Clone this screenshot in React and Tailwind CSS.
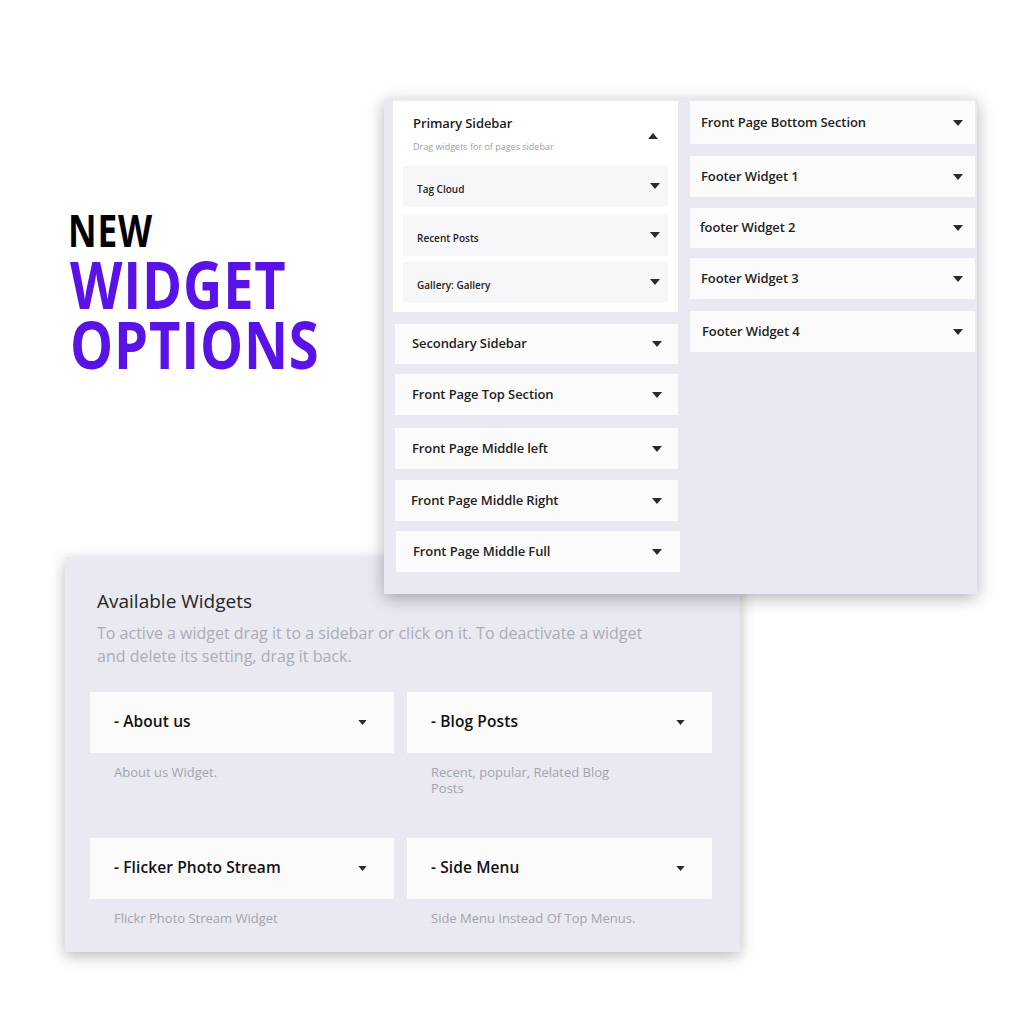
import React from "react";

const Caret = ({ up = false, className = "", w = 10, h = 6 }) => (
  <svg width={w} height={h} viewBox="0 0 10 6" className={className}>
    {up ? <path d="M0 6 L5 0 L10 6 Z" fill="#2b2b2b" /> : <path d="M0 0 L10 0 L5 6 Z" fill="#2b2b2b" />}
  </svg>
);

const Row = ({ label, className = "" }) => (
  <div className={`flex items-center justify-between bg-[#fbfbfc] text-[13px] font-semibold tracking-[-0.1px] text-[#1e1e1e] ${className}`}>
    <span>{label}</span>
    <Caret />
  </div>
);

const SubRow = ({ label, className = "" }) => (
  <div className={`flex h-[41px] items-center justify-between bg-[#f7f7f9] pl-[14px] pr-[8px] text-[10px] font-semibold text-[#222] ${className}`}>
    <span className="pt-[5px]">{label}</span>
    <Caret className="mt-[-2px]" />
  </div>
);

const Widget = ({ label, desc, descClass = "" }) => (
  <div className="flex flex-col">
    <div className="flex h-[61px] items-center justify-between bg-[#fbfbfc] pl-[24px] pr-[27px] text-[15.5px] font-semibold tracking-[0.1px] text-[#111]">
      <span>{label}</span>
      <Caret w={9} h={5} />
    </div>
    <div className={`mt-[11px] pl-[24px] text-[13px] leading-[16px] text-[#a4a4ae] ${descClass}`}>{desc}</div>
  </div>
);

export default function App() {
  return (
    <div className="relative h-[1024px] w-[1024px] overflow-hidden bg-white" style={{ fontFamily: '"Open Sans", "Noto Sans", sans-serif' }}>
      {/* Headline */}
      <div className="absolute left-[68px] top-[205px] font-bold">
        <div className="h-[48px] origin-left scale-x-[0.8] text-[44px] leading-[50px] tracking-[1px] text-black">NEW</div>
        <div className="ml-[2px] h-[60px] origin-left scale-x-[0.81] text-[67px] leading-[60px] tracking-[1px] text-[#5a13e6]">WIDGET</div>
        <div className="ml-[2px] h-[60px] origin-left scale-x-[0.81] text-[67px] leading-[60px] tracking-[1px] text-[#5a13e6]">OPTIONS</div>
      </div>

      {/* Available widgets panel */}
      <div className="absolute left-[65px] top-[557px] h-[395px] w-[675px] bg-[#e8e9f1] px-[25px] pt-[30px] shadow-[0_4px_14px_rgba(0,0,0,0.28)]">
        <div className="pl-[7px] text-[19px] text-[#262626]">Available Widgets</div>
        <div className="mt-[6px] w-[570px] pl-[7px] text-[16px] leading-[23px] text-[#acacb6]">
          To active a widget drag it to a sidebar or click on it. To deactivate a widget and delete its setting, drag it back.
        </div>
        <div className="mt-[24px] grid grid-cols-[304px_305px] gap-x-[13px] gap-y-[42px]">
          <Widget label="- About us" desc="About us Widget." />
          <Widget label="- Blog Posts" desc="Recent, popular, Related Blog Posts" descClass="w-[230px] h-[32px]" />
          <Widget label="- Flicker Photo Stream" desc="Flickr Photo Stream Widget" />
          <Widget label="- Side Menu" desc="Side Menu Instead Of Top Menus." />
        </div>
      </div>

      {/* Sidebars panel */}
      <div className="absolute left-[384px] top-[99px] flex h-[495px] w-[593px] gap-[12px] bg-[#e8e9f1] pl-[9px] pr-[2px] pt-[2px] shadow-[0_4px_16px_rgba(0,0,0,0.3)]">
        <div className="flex w-[285px] flex-col">
          <div className="bg-white px-[10px] pb-[9px]">
            <div className="flex items-start justify-between pl-[10px] pr-[10px] pt-[13px]">
              <div>
                <div className="text-[13px] font-semibold tracking-[-0.1px] text-[#1e1e1e]">Primary Sidebar</div>
                <div className="mt-[6px] text-[9px] text-[#a0a0a8]">Drag widgets for of pages sidebar</div>
              </div>
              <Caret up className="mt-[19px]" />
            </div>
            <div className="mt-[13px] flex flex-col">
              <SubRow label="Tag Cloud" />
              <SubRow label="Recent Posts" className="mt-[8px]" />
              <SubRow label="Gallery: Gallery" className="mt-[6px]" />
            </div>
          </div>
          <Row label="Secondary Sidebar" className="mt-[12px] ml-[2px] h-[40px] pl-[17px] pr-[16px]" />
          <Row label="Front Page Top Section" className="mt-[10px] ml-[2px] h-[41px] pl-[17px] pr-[16px]" />
          <Row label="Front Page Middle left" className="mt-[13px] ml-[2px] h-[41px] pl-[17px] pr-[16px]" />
          <Row label="Front Page Middle Right" className="mt-[11px] ml-[2px] h-[41px] pl-[16px] pr-[16px]" />
          <Row label="Front Page Middle Full" className="mt-[10px] ml-[3px] mr-[-2px] h-[41px] pl-[17px] pr-[18px]" />
        </div>
        <div className="flex flex-1 flex-col">
          <Row label="Front Page Bottom Section" className="h-[43px] pl-[11px] pr-[12px]" />
          <Row label="Footer Widget 1" className="mt-[12px] h-[41px] pl-[11px] pr-[12px]" />
          <Row label="footer Widget 2" className="mt-[11px] h-[40px] pl-[10px] pr-[12px]" />
          <Row label="Footer Widget 3" className="mt-[10px] h-[41px] pl-[11px] pr-[12px]" />
          <Row label="Footer Widget 4" className="mt-[12px] h-[41px] pl-[12px] pr-[12px]" />
        </div>
      </div>
    </div>
  );
}
